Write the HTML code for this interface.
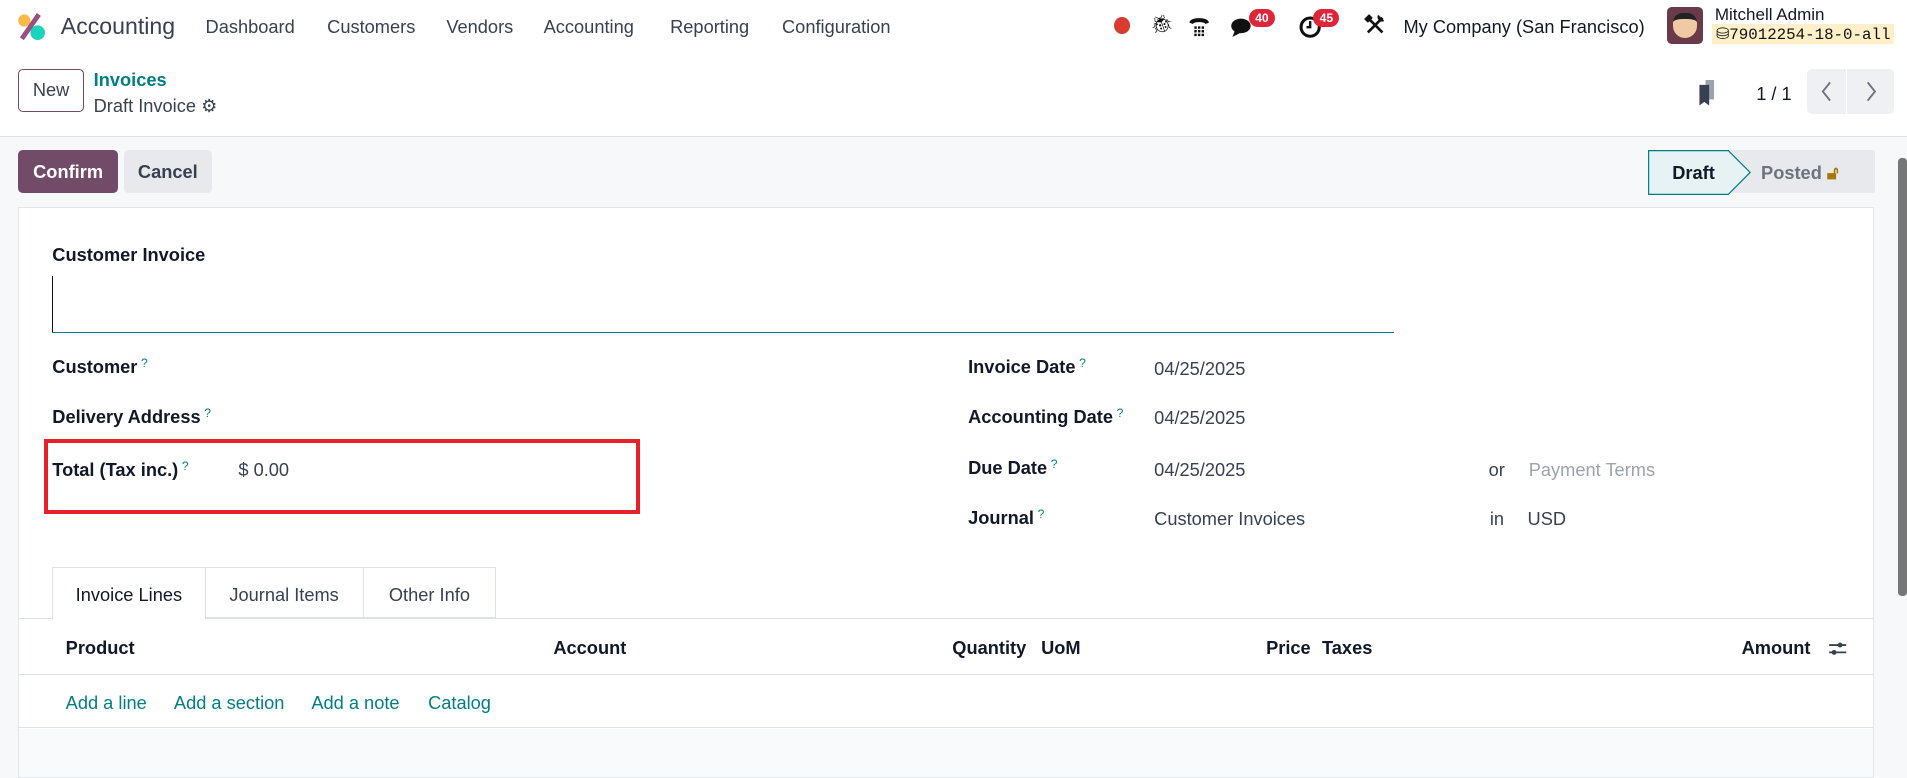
<!DOCTYPE html>
<html><head><meta charset="utf-8"><style>
html{zoom:1.21620}
body{margin:0;width:1568px;height:636px;overflow:hidden;position:relative;background:#f7f8fa;font-family:"Liberation Sans",sans-serif;font-size:15px;color:#374151}
.a{position:absolute;white-space:nowrap}
.b{font-weight:bold;color:#111827}
.q{color:#017e84;font-size:10px;vertical-align:top;margin-left:3px;font-weight:normal}
.t{color:#017e84}
.badge{position:absolute;background:#e0253a;color:#fff;font-size:10px;font-weight:bold;border-radius:8px;padding:2px 5px}
</style></head><body>
<div class="a" style="left:0;top:0;width:1568px;height:112px;background:#fff;border-bottom:1px solid #dee2e6"></div>
<svg class="a" style="left:14px;top:10px" width="24" height="24" viewBox="0 0 24 24"><circle cx="6" cy="7" r="5" fill="#fbb945"/><circle cx="17" cy="17" r="6" fill="#1ad3bb"/><path d="M4 22L18 2" stroke="#985184" stroke-width="4"/></svg>
<div class="a" style="left:50px;top:11px;font-size:19px;color:#374151">Accounting</div>
<div class="a" style="left:169px;top:13px">Dashboard</div>
<div class="a" style="left:269px;top:13px">Customers</div>
<div class="a" style="left:367px;top:13px">Vendors</div>
<div class="a" style="left:447px;top:13px">Accounting</div>
<div class="a" style="left:551px;top:13px">Reporting</div>
<div class="a" style="left:643px;top:13px">Configuration</div>
<div class="a" style="left:916px;top:14px;width:13px;height:14px;border-radius:50%;background:#d93b30"></div>
<div class="a" style="left:946px;top:11px;font-size:15px;color:#111">🐞︎</div>
<svg class="a" style="left:976px;top:11px" width="20" height="20" viewBox="0 0 20 20"><path d="M2 8c0-5 16-5 16 0l-3 1c0-2-10-2-10 0z" fill="#111"/><g fill="#111"><rect x="6" y="11" width="2" height="2"/><rect x="9" y="11" width="2" height="2"/><rect x="12" y="11" width="2" height="2"/><rect x="6" y="14" width="2" height="2"/><rect x="9" y="14" width="2" height="2"/><rect x="12" y="14" width="2" height="2"/><rect x="6" y="17" width="2" height="2"/><rect x="9" y="17" width="2" height="2"/><rect x="12" y="17" width="2" height="2"/></g></svg>
<svg class="a" style="left:1011px;top:12px" width="22" height="20" viewBox="0 0 22 20"><ellipse cx="9" cy="9" rx="8" ry="6" fill="#111"/><path d="M4 13l-2 5 6-3z" fill="#111"/></svg>
<div class="badge" style="left:1027px;top:7px">40</div>
<svg class="a" style="left:1067px;top:12px" width="20" height="20" viewBox="0 0 20 20"><circle cx="10" cy="10" r="7.5" fill="none" stroke="#111" stroke-width="2.5"/><path d="M10 5v5h-3" stroke="#111" stroke-width="2" fill="none"/></svg>
<div class="badge" style="left:1080px;top:7px">45</div>
<svg class="a" style="left:1121px;top:11px" width="20" height="20" viewBox="0 0 20 20"><path d="M4 4l12 12M16 4L4 16" stroke="#111" stroke-width="2.2"/><path d="M2 5l3-3 2 2-3 3z M13 2a3 3 0 0 0 4 4" fill="#111" stroke="#111" stroke-width="1.5"/></svg>
<div class="a" style="left:1154px;top:13px;color:#111827">My Company (San Francisco)</div>
<div class="a" style="left:1371px;top:6px;width:29px;height:30px;border-radius:4px;background:#6b3a4a"><div style="margin:5px 5px;width:19px;height:20px;border-radius:8px 8px 10px 10px;background:#f1c9a5;border-top:5px solid #222;box-sizing:border-box"></div></div>
<div class="a" style="left:1410px;top:4px;font-size:14px;color:#111827">Mitchell Admin</div>
<div class="a" style="left:1408px;top:20px;background:#fdf0c8;font-family:'Liberation Mono',monospace;font-size:13px;padding:0 3px;color:#111">⛁79012254-18-0-all</div>

<div class="a" style="left:15px;top:57px;width:54px;height:35px;border:1px solid #714b67;border-radius:4px;box-sizing:border-box;text-align:center;line-height:33px;color:#374151">New</div>
<div class="a b t" style="left:77px;top:57px;color:#017e84">Invoices</div>
<div class="a" style="left:77px;top:78px">Draft Invoice <span style="color:#374151">⚙</span></div>
<svg class="a" style="left:1395px;top:66px" width="18" height="22" viewBox="0 0 18 22"><rect x="7" y="0" width="7" height="16" fill="#9ca3af"/><path d="M2 4h8v17l-4-3-4 3z" fill="#374151"/></svg>
<div class="a" style="left:1444px;top:68px;color:#111827">1 / 1</div>
<div class="a" style="left:1486px;top:57px;width:32px;height:37px;background:#eef0f3;border-radius:4px 0 0 4px"><svg width="32" height="37"><path d="M19 11l-6 7.5 6 7.5" stroke="#6b7280" stroke-width="1.5" fill="none"/></svg></div>
<div class="a" style="left:1519px;top:57px;width:38px;height:37px;background:#eef0f3;border-radius:0 4px 4px 0"><svg width="38" height="37"><path d="M17 11l6 7.5-6 7.5" stroke="#6b7280" stroke-width="1.5" fill="none"/></svg></div>

<div class="a b" style="left:15px;top:123px;width:82px;height:36px;background:#714b67;color:#fff;border-radius:4px;text-align:center;line-height:36px">Confirm</div>
<div class="a b" style="left:102px;top:123px;width:72px;height:36px;background:#e7e9ed;color:#374151;border-radius:4px;text-align:center;line-height:36px">Cancel</div>
<div class="a" style="left:1355px;top:123px;width:187px;height:36px;background:#e7e9ed;border-radius:2px"></div>
<svg class="a" style="left:1355px;top:123px" width="85" height="37" viewBox="0 0 85 37"><path d="M0.5 0.5H66L84 18.5L66 36.5H0.5Z" fill="#e6f2f3" stroke="#017e84"/></svg>
<div class="a b" style="left:1375px;top:133px">Draft</div>
<div class="a b" style="left:1448px;top:133px;color:#6b7280">Posted <span style="color:#a67800">🔓︎</span></div>
<div class="a" style="left:1561px;top:130px;width:7px;height:360px;background:#777;border-radius:3px"></div>

<div class="a" style="left:15px;top:170px;width:1526px;height:470px;background:#fff;border:1px solid #e2e5e9;box-sizing:border-box"></div>
<div class="a" style="left:16px;top:599px;width:1524px;height:40px;background:#f9fafb"></div>
<div class="a b" style="left:43px;top:201px">Customer Invoice</div>
<div class="a" style="left:43px;top:227px;width:1px;height:46px;background:#111"></div>
<div class="a" style="left:43px;top:273px;width:1103px;height:1px;background:#017e84"></div>

<div class="a b" style="left:43px;top:293px">Customer<span class="q">?</span></div>
<div class="a b" style="left:43px;top:334px">Delivery Address<span class="q">?</span></div>
<div class="a b" style="left:43px;top:377px">Total (Tax inc.)<span class="q">?</span></div>
<div class="a" style="left:196px;top:377px">$ 0.00</div>
<div class="a" style="left:36px;top:361px;width:490px;height:62px;border:4px solid #e8202a;box-sizing:border-box"></div>

<div class="a b" style="left:796px;top:293px">Invoice Date<span class="q">?</span></div>
<div class="a b" style="left:796px;top:334px">Accounting Date<span class="q">?</span></div>
<div class="a b" style="left:796px;top:376px">Due Date<span class="q">?</span></div>
<div class="a b" style="left:796px;top:417px">Journal<span class="q">?</span></div>
<div class="a" style="left:949px;top:294px">04/25/2025</div>
<div class="a" style="left:949px;top:335px">04/25/2025</div>
<div class="a" style="left:949px;top:377px">04/25/2025</div>
<div class="a" style="left:949px;top:418px">Customer Invoices</div>
<div class="a" style="left:1224px;top:377px">or</div>
<div class="a" style="left:1257px;top:377px;color:#9ca3af">Payment Terms</div>
<div class="a" style="left:1225px;top:418px">in</div>
<div class="a" style="left:1256px;top:418px">USD</div>

<div class="a" style="left:16px;top:508px;width:1524px;height:1px;background:#dee2e6"></div>
<div class="a" style="left:43px;top:466px;width:126px;height:43px;background:#fff;border:1px solid #dee2e6;border-bottom:none;box-sizing:border-box;text-align:center;line-height:44px;color:#111827">Invoice Lines</div>
<div class="a" style="left:169px;top:466px;width:130px;height:42px;border:1px solid #dee2e6;border-left:none;box-sizing:border-box;text-align:center;line-height:44px">Journal Items</div>
<div class="a" style="left:299px;top:466px;width:109px;height:42px;border:1px solid #dee2e6;border-left:none;box-sizing:border-box;text-align:center;line-height:44px">Other Info</div>

<div class="a b" style="left:54px;top:524px">Product</div>
<div class="a b" style="left:455px;top:524px">Account</div>
<div class="a b" style="left:783px;top:524px">Quantity</div>
<div class="a b" style="left:856px;top:524px">UoM</div>
<div class="a b" style="left:1041px;top:524px">Price</div>
<div class="a b" style="left:1087px;top:524px">Taxes</div>
<div class="a b" style="left:1432px;top:524px">Amount</div>
<svg class="a" style="left:1503px;top:525px" width="16" height="16" viewBox="0 0 16 16"><path d="M1 5h14M1 11h14" stroke="#374151" stroke-width="1.5"/><circle cx="10" cy="5" r="2" fill="#374151"/><circle cx="5" cy="11" r="2" fill="#374151"/></svg>
<div class="a" style="left:16px;top:554px;width:1524px;height:1px;background:#dee2e6"></div>
<div class="a t" style="left:54px;top:569px">Add a line</div>
<div class="a t" style="left:143px;top:569px">Add a section</div>
<div class="a t" style="left:256px;top:569px">Add a note</div>
<div class="a t" style="left:352px;top:569px">Catalog</div>
<div class="a" style="left:16px;top:598px;width:1524px;height:1px;background:#dee2e6"></div>
</body></html>
